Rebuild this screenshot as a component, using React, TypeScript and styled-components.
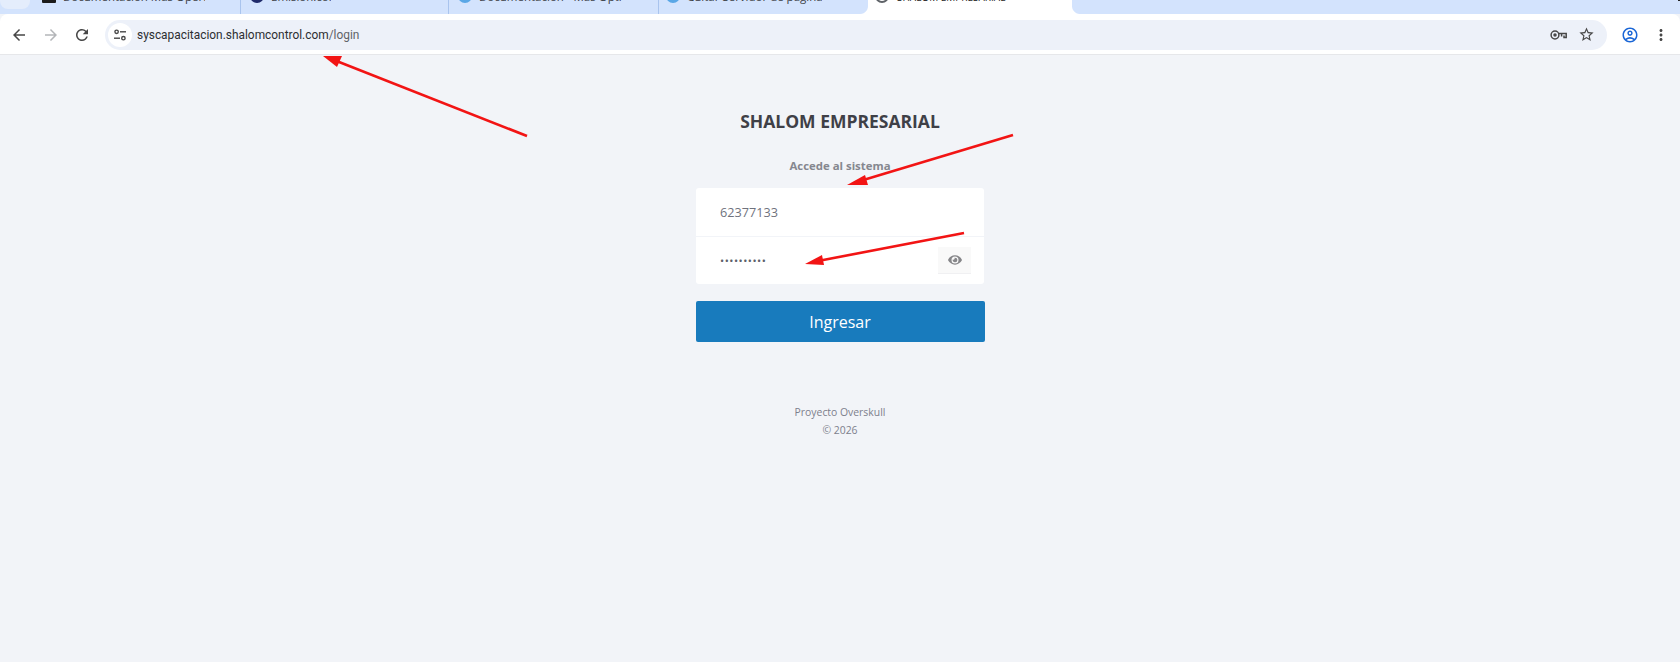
import styled, { createGlobalStyle } from "styled-components";
import { FaEye } from "react-icons/fa";
import {
  MdArrowBack,
  MdArrowForward,
  MdMoreVert,
  MdOutlineAccountCircle,
  MdRefresh,
  MdStarBorder,
} from "react-icons/md";

const GlobalStyle = createGlobalStyle`
  html, body {
    margin: 0;
    padding: 0;
    height: 100%;
    overflow: hidden;
    background: #f2f4f8;
    font-family: "Open Sans", "Liberation Sans", sans-serif;
  }
  * {
    box-sizing: border-box;
  }
`;

const tabs = [
  { width: 211, pad: 12, title: "Documentación Mas Operación", icon: "#1b1b1b", square: true, textWidth: 142 },
  { width: 208, pad: 9, title: "Emisión.com", icon: "#1f2a6b", square: false, textWidth: 60 },
  { width: 210, pad: 9, title: "Documentación - Mas Opti | O", icon: "#5aa7e6", square: false, textWidth: 143 },
  { width: 209, pad: 7, title: "Cuitar Servidor de página | ON", icon: "#5aa7e6", square: false, textWidth: 135 },
];

const App = () => {
  return (
    <Page>
      <GlobalStyle />
      <TabStrip>
        <NewTabPin />
        {tabs.map(({ width, pad, title, icon, square, textWidth }, index) => (
          <Tab key={title} $width={width} $pad={pad} $divider={index < 3}>
            <Favicon $color={icon} $square={square} />
            <TabTitle $width={textWidth}>{title}</TabTitle>
          </Tab>
        ))}
        <ActiveTab>
          <ActiveFavicon $color="#fff" $square={false} />
          <ActiveTitle $width={112}>SHALOM EMPRESARIAL</ActiveTitle>
        </ActiveTab>
        <Tab $width={60} $pad={16} $divider={false}>
          <TabTitle $width={12}>+</TabTitle>
        </Tab>
        <WindowControls>
          <MinimizeMark />
          <CloseMark />
        </WindowControls>
      </TabStrip>

      <Toolbar>
        <NavButtons>
          <NavIcon>
            <MdArrowBack size={18} color="#474747" />
          </NavIcon>
          <NavIcon>
            <MdArrowForward size={18} color="#b4b6b9" />
          </NavIcon>
          <NavIcon>
            <MdRefresh size={18} color="#474747" />
          </NavIcon>
        </NavButtons>
        <AddressBar>
          <SiteInfo>
            <svg width="14" height="14" viewBox="0 0 14 14" fill="none" stroke="#474747" strokeWidth="1.4">
              <circle cx="3.6" cy="3.8" r="1.7" />
              <path d="M7 3.8h6" />
              <circle cx="10.4" cy="10.2" r="1.7" />
              <path d="M1 10.2h6" />
            </svg>
          </SiteInfo>
          <Url>
            syscapacitacion.shalomcontrol.com<UrlPath>/login</UrlPath>
          </Url>
          <AddressActions>
            <svg width="17" height="10" viewBox="0 0 17 10" fill="none" stroke="#474747" strokeWidth="1.5">
              <circle cx="5" cy="5" r="3.9" />
              <circle cx="5" cy="5" r="1" fill="#474747" />
              <path d="M9 3.6h7.2v4h-2.2V5.6M11.6 3.6v3" />
            </svg>
            <MdStarBorder size={17} color="#474747" />
          </AddressActions>
        </AddressBar>
        <ProfileArea>
          <MdOutlineAccountCircle size={18} color="#1a66d6" />
          <MdMoreVert size={18} color="#474747" />
        </ProfileArea>
      </Toolbar>

      <Main>
        <Title>SHALOM EMPRESARIAL</Title>
        <Subtitle>Accede al sistema</Subtitle>
        <Card>
          <Field>
            <FieldValue>62377133</FieldValue>
          </Field>
          <Field>
            <Dots>••••••••••</Dots>
            <EyeButton>
              <FaEye size={14} color="#868689" />
            </EyeButton>
          </Field>
        </Card>
        <SubmitButton>Ingresar</SubmitButton>
        <Footer>
          <div>Proyecto Overskull</div>
          <div>© 2026</div>
        </Footer>
      </Main>

      <Annotations viewBox="0 0 1680 662" width="1680" height="662">
        <line x1="527" y1="136" x2="334" y2="60" />
        <polygon points="323,56 342,56 337,67" />
        <line x1="1013" y1="135" x2="860" y2="181" />
        <polygon points="847,185 865,175 868,185" />
        <line x1="964" y1="233" x2="818" y2="261" />
        <polygon points="805,264 822,255 824,265" />
      </Annotations>
    </Page>
  );
};

const Page = styled.div`
  position: relative;
  width: 1680px;
  height: 662px;
  overflow: hidden;
  display: flex;
  flex-direction: column;
`;

const TabStrip = styled.div`
  display: flex;
  height: 14px;
  overflow: hidden;
  background: #d3e3fd;
`;

const NewTabPin = styled.div`
  width: 30px;
  height: 9px;
  border-radius: 0 0 8px 8px;
  background: #e4edfc;
  flex: none;
`;

const Tab = styled.div<{ $width: number; $pad: number; $divider: boolean }>`
  flex: none;
  display: flex;
  align-items: flex-end;
  gap: 7px;
  width: ${({ $width }) => $width}px;
  height: 14px;
  padding-left: ${({ $pad }) => $pad}px;
  padding-bottom: 10px;
  border-right: 1px solid ${({ $divider }) => ($divider ? "#a9c4ee" : "transparent")};
`;

const ActiveTab = styled.div`
  position: relative;
  flex: none;
  display: flex;
  align-items: flex-end;
  gap: 8px;
  width: 204px;
  height: 14px;
  padding-left: 7px;
  padding-bottom: 10px;
  background: #fff;
  &::before,
  &::after {
    content: "";
    position: absolute;
    bottom: 0;
    width: 8px;
    height: 8px;
  }
  &::before {
    left: -8px;
    background: radial-gradient(circle at 0 0, #d3e3fd 7.5px, #fff 8.5px);
  }
  &::after {
    right: -8px;
    background: radial-gradient(circle at 100% 0, #d3e3fd 7.5px, #fff 8.5px);
  }
`;

const Favicon = styled.span<{ $color: string; $square: boolean }>`
  flex: none;
  width: 14px;
  height: 14px;
  border-radius: ${({ $square }) => ($square ? "1px" : "50%")};
  background: ${({ $color }) => $color};
  transform: translateY(-1px);
`;

const ActiveFavicon = styled(Favicon)`
  border: 2px solid #5f6368;
`;

const TabTitle = styled.span<{ $width: number }>`
  width: ${({ $width }) => $width}px;
  overflow: hidden;
  white-space: nowrap;
  font-size: 11.5px;
  line-height: 14px;
  color: #3b4046;
`;

const ActiveTitle = styled(TabTitle)`
  font-size: 10px;
  color: #1f1f1f;
`;

const WindowControls = styled.div`
  position: relative;
  flex: 1;
`;

const MinimizeMark = styled.span`
  position: absolute;
  top: 0;
  left: 546px;
  width: 7px;
  height: 1px;
  background: #222;
`;

const CloseMark = styled.span`
  position: absolute;
  top: 0;
  left: 586px;
  width: 9px;
  height: 2px;
  border-left: 1px solid #555;
  border-right: 1px solid #555;
`;

const Toolbar = styled.div`
  display: flex;
  align-items: center;
  height: 41px;
  padding-top: 1px;
  background: #fff;
  border-bottom: 1px solid #e6e7ea;
  border-radius: 8px 8px 0 0;
`;

const NavButtons = styled.div`
  display: flex;
  width: 105px;
  padding-left: 10px;
  gap: 13.5px;
`;

const NavIcon = styled.span`
  display: flex;
  width: 18px;
  justify-content: center;
`;

const AddressBar = styled.div`
  display: flex;
  align-items: center;
  width: 1502px;
  height: 30px;
  padding: 0 12px 0 3px;
  border-radius: 15px;
  background: #edf1f9;
`;

const SiteInfo = styled.span`
  display: flex;
  align-items: center;
  justify-content: center;
  width: 24px;
  height: 24px;
  border-radius: 50%;
  background: #fff;
`;

const Url = styled.div`
  margin-left: 5px;
  font-family: "Roboto", "Open Sans", sans-serif;
  font-size: 11.9px;
  color: #2c2e31;
`;

const UrlPath = styled.span`
  color: #5f6368;
`;

const AddressActions = styled.div`
  display: flex;
  align-items: center;
  gap: 11px;
  margin-left: auto;
`;

const ProfileArea = styled.div`
  display: flex;
  align-items: center;
  gap: 13px;
  margin-left: 14px;
`;

const Main = styled.main`
  flex: 1;
  display: flex;
  flex-direction: column;
  align-items: center;
  background: #f2f4f8;
  padding-top: 54px;
`;

const Title = styled.h1`
  margin: 0;
  font-size: 17.5px;
  line-height: 24px;
  font-weight: 700;
  color: #3f4047;
`;

const Subtitle = styled.div`
  margin-top: 25px;
  font-size: 11.4px;
  line-height: 16px;
  font-weight: 700;
  color: #85878f;
`;

const Card = styled.div`
  width: 288px;
  margin-top: 14px;
  border-radius: 3px;
  background: #fff;
`;

const Field = styled.div`
  display: flex;
  align-items: center;
  justify-content: space-between;
  height: 48px;
  padding: 0 13px 0 24px;
  & + & {
    border-top: 1px solid #f2f4f8;
  }
`;

const FieldValue = styled.span`
  font-size: 12.7px;
  color: #6f727d;
`;

const Dots = styled.span`
  font-size: 11px;
  letter-spacing: 0.5px;
  color: #5d5f6a;
`;

const EyeButton = styled.span`
  display: flex;
  align-items: center;
  justify-content: center;
  width: 33px;
  height: 27px;
  background: #f9f9f9;
  border-bottom: 1px solid #f0f0f2;
`;

const SubmitButton = styled.button`
  width: 289px;
  height: 41px;
  margin-top: 17px;
  border: none;
  border-radius: 2px;
  background: #187bbd;
  color: #fff;
  font-family: inherit;
  font-size: 16px;
`;

const Footer = styled.footer`
  margin-top: 62px;
  font-size: 10.4px;
  line-height: 17.5px;
  text-align: center;
  color: #7d7f8c;
`;

const Annotations = styled.svg`
  position: absolute;
  top: 0;
  left: 0;
  pointer-events: none;
  line {
    stroke: #f21414;
    stroke-width: 2.6;
  }
  polygon {
    fill: #f21414;
  }
`;

export default App;
